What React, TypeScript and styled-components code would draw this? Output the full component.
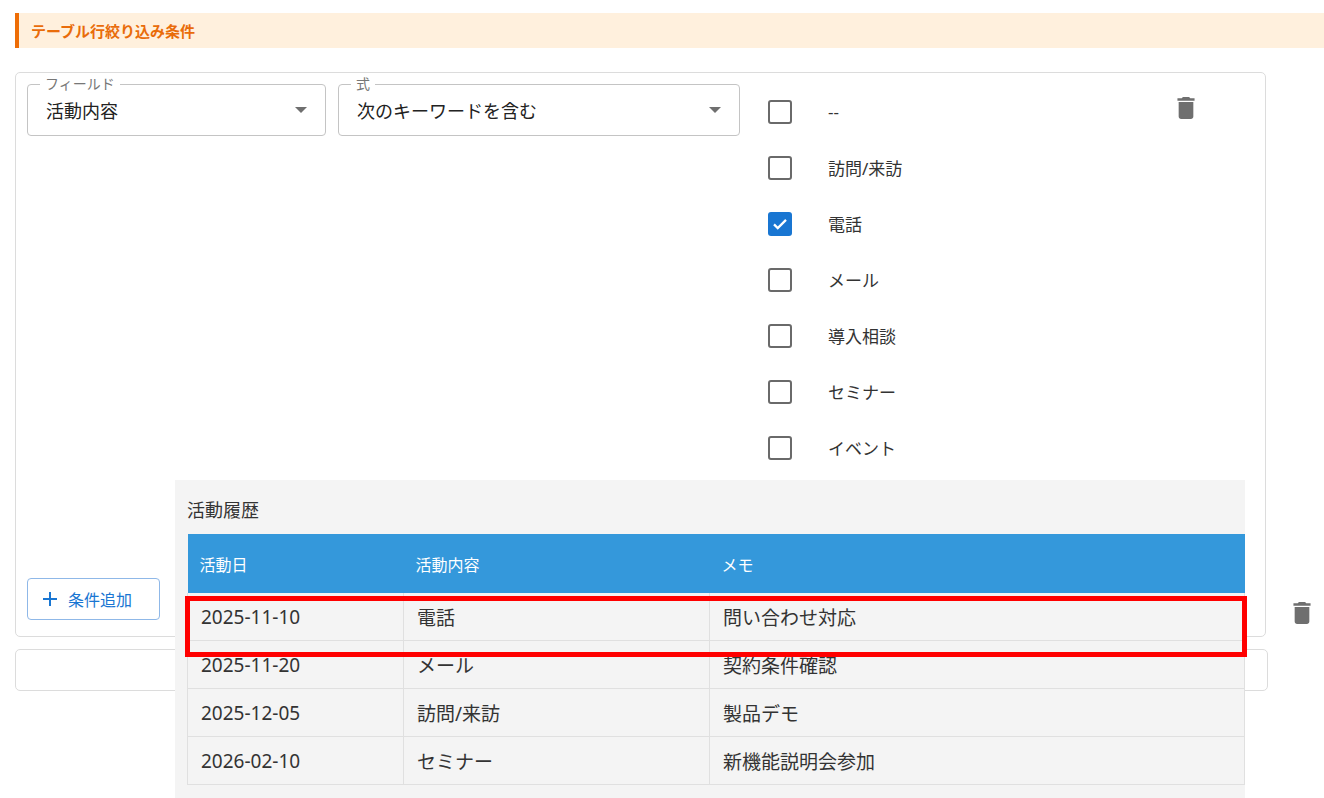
import React from "react";
import styled, { createGlobalStyle } from "styled-components";

const Global = createGlobalStyle`
  html, body { margin: 0; padding: 0; background: #fff; }
  body { font-family: "Noto Sans", "Noto Sans CJK JP", sans-serif; color: #333; }
`;

const Page = styled.div`
  position: relative;
  width: 1324px;
  height: 798px;
  overflow: hidden;
  padding-top: 13px;
  box-sizing: border-box;
`;

const Header = styled.div`
  margin-left: 15px;
  height: 35px;
  background: #fff0dd;
  border-left: 4px solid #ee6d06;
  display: flex;
  align-items: center;
  padding-left: 12px;
  font-size: 15px;
  font-weight: 700;
  color: #e96c0a;
`;

const Card = styled.div`
  margin: 24px 0 0 15px;
  width: 1251px;
  height: 565px;
  box-sizing: border-box;
  border: 1px solid #dcdcdc;
  border-radius: 5px;
  padding: 11px 11px 16px 11px;
  display: flex;
  flex-direction: column;
  justify-content: space-between;
  position: relative;
`;

const Card2 = styled.div`
  margin: 12px 0 0 15px;
  width: 1251px;
  height: 40px;
  border: 1px solid #dcdcdc;
  border-radius: 5px;
`;

const Row = styled.div`
  display: flex;
  gap: 12px;
  align-items: flex-start;
`;

const Select = styled.div<{ w: number }>`
  position: relative;
  width: ${(p) => p.w}px;
  height: 52px;
  box-sizing: border-box;
  border: 1px solid #c4c4c4;
  border-radius: 4px;
  display: flex;
  align-items: center;
  justify-content: space-between;
  padding: 0 18px 0 18px;
  font-size: 18px;
  color: #222;
`;

const Legend = styled.span`
  position: absolute;
  top: -10px;
  left: 12px;
  background: #fff;
  padding: 0 5px;
  font-size: 14px;
  color: #777;
  line-height: 18px;
`;

const Caret = styled.span`
  width: 0;
  height: 0;
  border-left: 6px solid transparent;
  border-right: 6px solid transparent;
  border-top: 6px solid #6f6f6f;
`;

const Checks = styled.div`
  margin-left: 16px;
  margin-top: 0;
  display: flex;
  flex-direction: column;
`;

const CheckRow = styled.div`
  height: 57px;
  display: flex;
  align-items: center;
  gap: 36px;
  font-size: 17px;
  color: #333;
  margin-top: -1px;
`;

const Box = styled.span<{ on?: boolean }>`
  width: 24px;
  height: 24px;
  box-sizing: border-box;
  border-radius: 3px;
  border: ${(p) => (p.on ? "none" : "2px solid #6a6a6a")};
  background: ${(p) => (p.on ? "#1976d2" : "transparent")};
  display: flex;
  align-items: center;
  justify-content: center;
`;

const Trash = styled.div<{ top: number; left: number }>`
  position: absolute;
  top: ${(p) => p.top}px;
  left: ${(p) => p.left}px;
`;

const AddBtn = styled.button`
  width: 133px;
  height: 42px;
  border: 1px solid #8fb8e8;
  border-radius: 4px;
  background: #fff;
  color: #1976d2;
  font-family: inherit;
  font-size: 16px;
  display: flex;
  align-items: center;
  gap: 10px;
  padding: 0 0 0 14px;
  box-sizing: border-box;
`;

const Overlay = styled.div`
  position: absolute;
  left: 175px;
  top: 480px;
  width: 1070px;
  height: 318px;
  background: #f4f4f4;
  padding: 16px 0 0 12px;
  box-sizing: border-box;
`;

const Title = styled.div`
  font-size: 18px;
  color: #333;
  height: 38px;
`;

const Table = styled.table`
  border-collapse: collapse;
  width: 1058px;
  font-size: 19px;
  color: #333;
`;

const Th = styled.th`
  background: #3498db;
  color: #fff;
  font-weight: 400;
  font-size: 16px;
  text-align: left;
  height: 59px;
  padding: 0 12px;
`;

const Td = styled.td`
  height: 47px;
  padding: 0 13px;
  border: 1px solid #e0e0e0;
  border-top: none;
`;

const Highlight = styled.div`
  position: absolute;
  left: 185px;
  top: 596px;
  width: 1062px;
  height: 61px;
  box-sizing: border-box;
  border: 5px solid #ff0000;
`;

const TrashIcon = () => (
  <svg width="18" height="22" viewBox="5 3 14 18">
    <path d="M6 19c0 1.1.9 2 2 2h8c1.1 0 2-.9 2-2V7H6v12zM19 4h-3.5l-1-1h-5l-1 1H5v2h14V4z" fill="#6f6f6f" />
  </svg>
);

const items = ["--", "訪問/来訪", "電話", "メール", "導入相談", "セミナー", "イベント"];
const rows = [
  ["2025-11-10", "電話", "問い合わせ対応"],
  ["2025-11-20", "メール", "契約条件確認"],
  ["2025-12-05", "訪問/来訪", "製品デモ"],
  ["2026-02-10", "セミナー", "新機能説明会参加"],
];

export default function App() {
  return (
    <Page>
      <Global />
      <Header>テーブル行絞り込み条件</Header>
      <Card>
        <Row>
          <Select w={299}>
            <Legend>フィールド</Legend>
            活動内容
            <Caret />
          </Select>
          <Select w={402}>
            <Legend>式</Legend>
            次のキーワードを含む
            <Caret />
          </Select>
          <Checks>
            {items.map((t) => (
              <CheckRow key={t}>
                <Box on={t === "電話"}>
                  {t === "電話" && (
                    <svg width="18" height="18" viewBox="0 0 24 24">
                      <path d="M4 12.5l5 5L20 6.5" stroke="#fff" strokeWidth="3" fill="none" />
                    </svg>
                  )}
                </Box>
                {t}
              </CheckRow>
            ))}
          </Checks>
        </Row>
        <AddBtn>
          <svg width="16" height="16" viewBox="0 0 16 16">
            <path d="M8 1v14M1 8h14" stroke="#1976d2" strokeWidth="2" />
          </svg>
          条件追加
        </AddBtn>
        <Trash top={24} left={1161}>
          <TrashIcon />
        </Trash>
      </Card>
      <Card2 />
      <Trash top={602} left={1293}>
        <TrashIcon />
      </Trash>
      <Overlay>
        <Title>活動履歴</Title>
        <Table>
          <thead>
            <tr>
              <Th style={{ width: 192 }}>活動日</Th>
              <Th style={{ width: 282 }}>活動内容</Th>
              <Th>メモ</Th>
            </tr>
          </thead>
          <tbody>
            {rows.map((r) => (
              <tr key={r[0]}>
                {r.map((c, i) => (
                  <Td key={i}>{c}</Td>
                ))}
              </tr>
            ))}
          </tbody>
        </Table>
      </Overlay>
      <Highlight />
    </Page>
  );
}
